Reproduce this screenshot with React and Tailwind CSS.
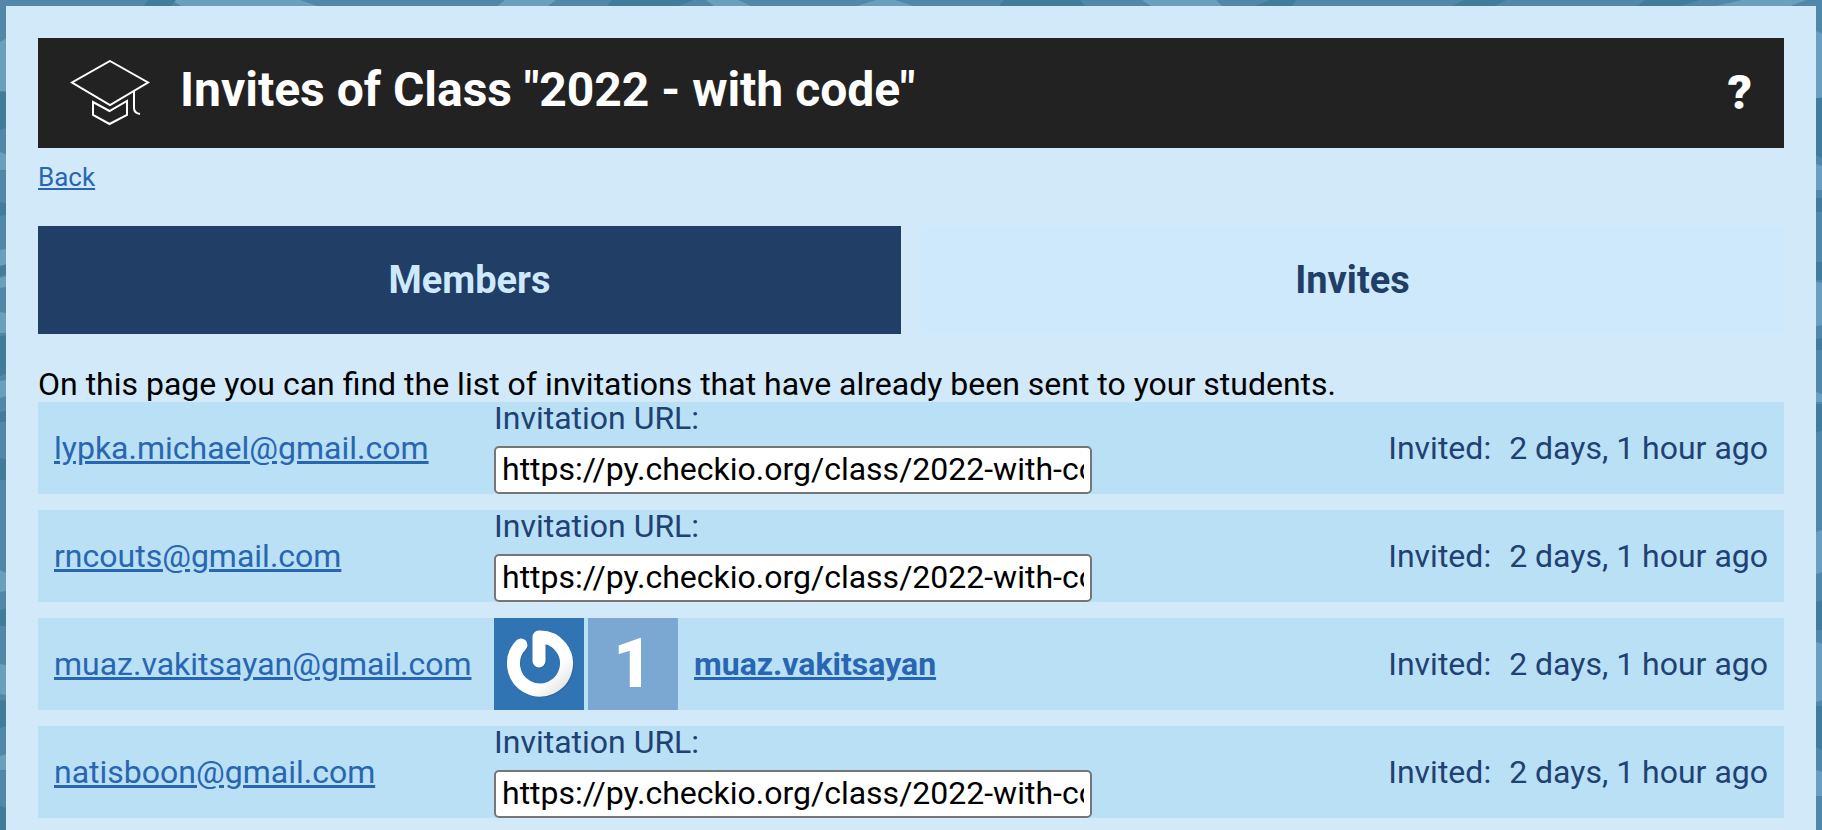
import React from 'react';

const INVITE_URL = 'https://py.checkio.org/class/2022-with-code/invite/';

const invites = [
  { email: 'lypka.michael@gmail.com', invited: '2 days, 1 hour ago' },
  { email: 'rncouts@gmail.com', invited: '2 days, 1 hour ago' },
  {
    email: 'muaz.vakitsayan@gmail.com',
    invited: '2 days, 1 hour ago',
    user: { name: 'muaz.vakitsayan', level: 1 },
  },
  { email: 'natisboon@gmail.com', invited: '2 days, 1 hour ago' },
];

// Faceted pattern behind the page
function Backdrop() {
  return (
    <svg
      className="absolute inset-0 -z-10 h-full w-full"
      viewBox="0 0 1822 830"
      preserveAspectRatio="none"
      aria-hidden="true"
    >
      <rect width="1822" height="830" fill="#5188a9" />
      <g fill="#6b9fbe">
        <path d="M0 42 40 20V91H0Z" />
        <path d="M0 152 20 160V170H0Z" />
        <path d="M0 250 20 246V260L0 266Z" />
        <path d="M0 278 20 272V284L0 288Z" />
        <path d="M0 312 20 316V333H0Z" />
        <path d="M0 381 20 378V392L0 398Z" />
        <path d="M0 570 20 580V588L0 592Z" />
        <path d="M0 664 20 668V698L0 694Z" />
        <path d="M0 756 20 750V770H0Z" />
        <path d="M1810 28 1822 34V97L1810 100Z" />
        <path d="M1810 162 1822 166V190H1810Z" />
        <path d="M1810 280 1822 283V325L1810 328Z" />
        <path d="M1810 390 1822 394V402H1810Z" />
        <path d="M1810 534 1822 530V572L1810 576Z" />
        <path d="M1810 640 1822 644V700L1810 704Z" />
        <path d="M1810 768 1822 772V796H1810Z" />
        <path d="M172 0H300L334 12H190Z" />
        <path d="M505 0H556L540 12H490Z" />
        <path d="M706 0H738L764 12H722Z" />
        <path d="M876 0H895L932 12H838Z" />
        <path d="M1142 0H1216L1228 12H1160Z" />
        <path d="M1742 0H1806L1775 12H1690Z" />
      </g>
      <g fill="#427c9b">
        <path d="M0 92H20V122L0 130Z" />
        <path d="M0 202 20 206V213L0 216Z" />
        <path d="M0 266 20 262V271L0 276Z" />
        <path d="M0 336 20 334V368L0 376Z" />
        <path d="M0 412 20 408V422H0Z" />
        <path d="M0 458 20 462V480H0Z" />
        <path d="M0 610 20 604V626H0Z" />
        <path d="M0 700 20 702V722L0 728Z" />
        <path d="M0 806 20 812V830H0Z" />
        <path d="M1810 98H1822V158L1810 152Z" />
        <path d="M1810 198H1822V212H1810Z" />
        <path d="M1810 262H1822V280H1810Z" />
        <path d="M1810 340 1822 338V350H1810Z" />
        <path d="M1810 404H1822V430L1810 436Z" />
        <path d="M1810 604 1822 600V630H1810Z" />
        <path d="M1810 706H1822V750L1810 744Z" />
        <path d="M148 0H176L166 12H140Z" />
        <path d="M612 0H694L664 12H602Z" />
        <path d="M1004 0H1080L1090 12H994Z" />
        <path d="M1270 0H1296L1288 12H1240Z" />
        <path d="M1464 0H1506L1484 12H1440Z" />
        <path d="M1645 0H1700L1660 12H1630Z" />
      </g>
    </svg>
  );
}

function ClassIcon() {
  return (
    <svg width="80" height="66" viewBox="0 0 80 66" fill="none" stroke="#fff" strokeWidth="2" aria-hidden="true">
      <path d="M40 1 78 22.500 40 45 2 22.500Z" />
      <path d="M23 42 V55 L39.500 64 57 55 V41 L39.500 51Z" />
      <path d="M64 31 V48 Q64 53 70 54" />
    </svg>
  );
}

function Avatar() {
  return (
    <svg className="block h-[92px] w-[90px] bg-[#3174b3]" viewBox="0 0 90 92" fill="none" role="img" aria-label="Avatar">
      <defs>
        <linearGradient id="ring" x1="0" y1="0" x2="1" y2="1">
          <stop offset="0.7" stopColor="#fff" />
          <stop offset="1" stopColor="#e2e2e2" />
        </linearGradient>
      </defs>
      <g strokeWidth="13" strokeLinecap="round" strokeLinejoin="round">
        <path stroke="#2b68a3" d="M28 28 A26.500 26.500 0 1 0 46 20 V44" />
        <path stroke="url(#ring)" d="M27 27 A26.500 26.500 0 1 0 45 19 V43" />
      </g>
    </svg>
  );
}

function Header() {
  return (
    <header className="flex h-[110px] items-center bg-[#222] px-8 text-white">
      <ClassIcon />
      <h1 className="ml-[30px] flex-1 pb-1.5 text-5xl leading-none font-bold">Invites of Class "2022 - with code"</h1>
      <button type="button" aria-label="Help" className="text-5xl leading-none font-black">?</button>
    </header>
  );
}

function Tabs() {
  return (
    <nav className="grid h-[108px] grid-cols-2 gap-5 text-[38px] leading-none font-bold">
      <a href="#members" className="flex items-center justify-center bg-[#213e66] text-[#cde9fb]">Members</a>
      <a href="#invites" className="flex items-center justify-center bg-[#cde9fb] text-[#213e66]">Invites</a>
    </nav>
  );
}

function InviteRow({ invite, index }) {
  const { email, invited, user } = invite;
  const inputId = `invite-url-${index}`;

  return (
    <li className="flex h-[92px] items-center bg-[#b9e0f5] px-4">
      <div className="w-[440px] shrink-0">
        <a href={`mailto:${email}`} className="text-[#2966b1] underline">{email}</a>
      </div>
      {user ? (
        <div className="flex flex-1 items-center">
          <Avatar />
          <div className="ml-1 flex h-[92px] w-[90px] items-center justify-center bg-[#7ba7d3] text-[68px] leading-none font-black text-white">
            {user.level}
          </div>
          <a href="#profile" className="ml-4 font-bold text-[#2966b1] underline">{user.name}</a>
        </div>
      ) : (
        <div className="flex h-full flex-1 flex-col justify-between">
          <label htmlFor={inputId} className="leading-8">Invitation URL:</label>
          <input
            id={inputId}
            type="text"
            readOnly
            value={INVITE_URL}
            className="h-12 w-[598px] rounded-[5px] border-2 border-[#767676] bg-white px-1.5 pb-0.5 text-black"
          />
        </div>
      )}
      <div className="flex gap-[18px]">
        <span>Invited:</span>
        <span>{invited}</span>
      </div>
    </li>
  );
}

export default function App() {
  return (
    <div className="relative isolate min-h-screen p-[6px] pb-0 font-[Roboto,sans-serif]">
      <Backdrop />
      <main className="min-h-[calc(100vh-6px)] bg-[#d1e9f9] px-8 pt-8">
        <Header />
        <div className="pt-3">
          <a href="#back" className="block w-fit text-[26px] leading-[34px] text-[#2966b1] underline">Back</a>
        </div>
        <div className="pt-8">
          <Tabs />
        </div>
        <p className="pt-8 text-[32px] leading-9 text-black">
          On this page you can find the list of invitations that have already been sent to your students.
        </p>
        <ul className="flex flex-col gap-4 text-[32px] leading-9 text-[#1f4173]">
          {invites.map((invite, index) => (
            <InviteRow key={invite.email} invite={invite} index={index} />
          ))}
        </ul>
      </main>
    </div>
  );
}
